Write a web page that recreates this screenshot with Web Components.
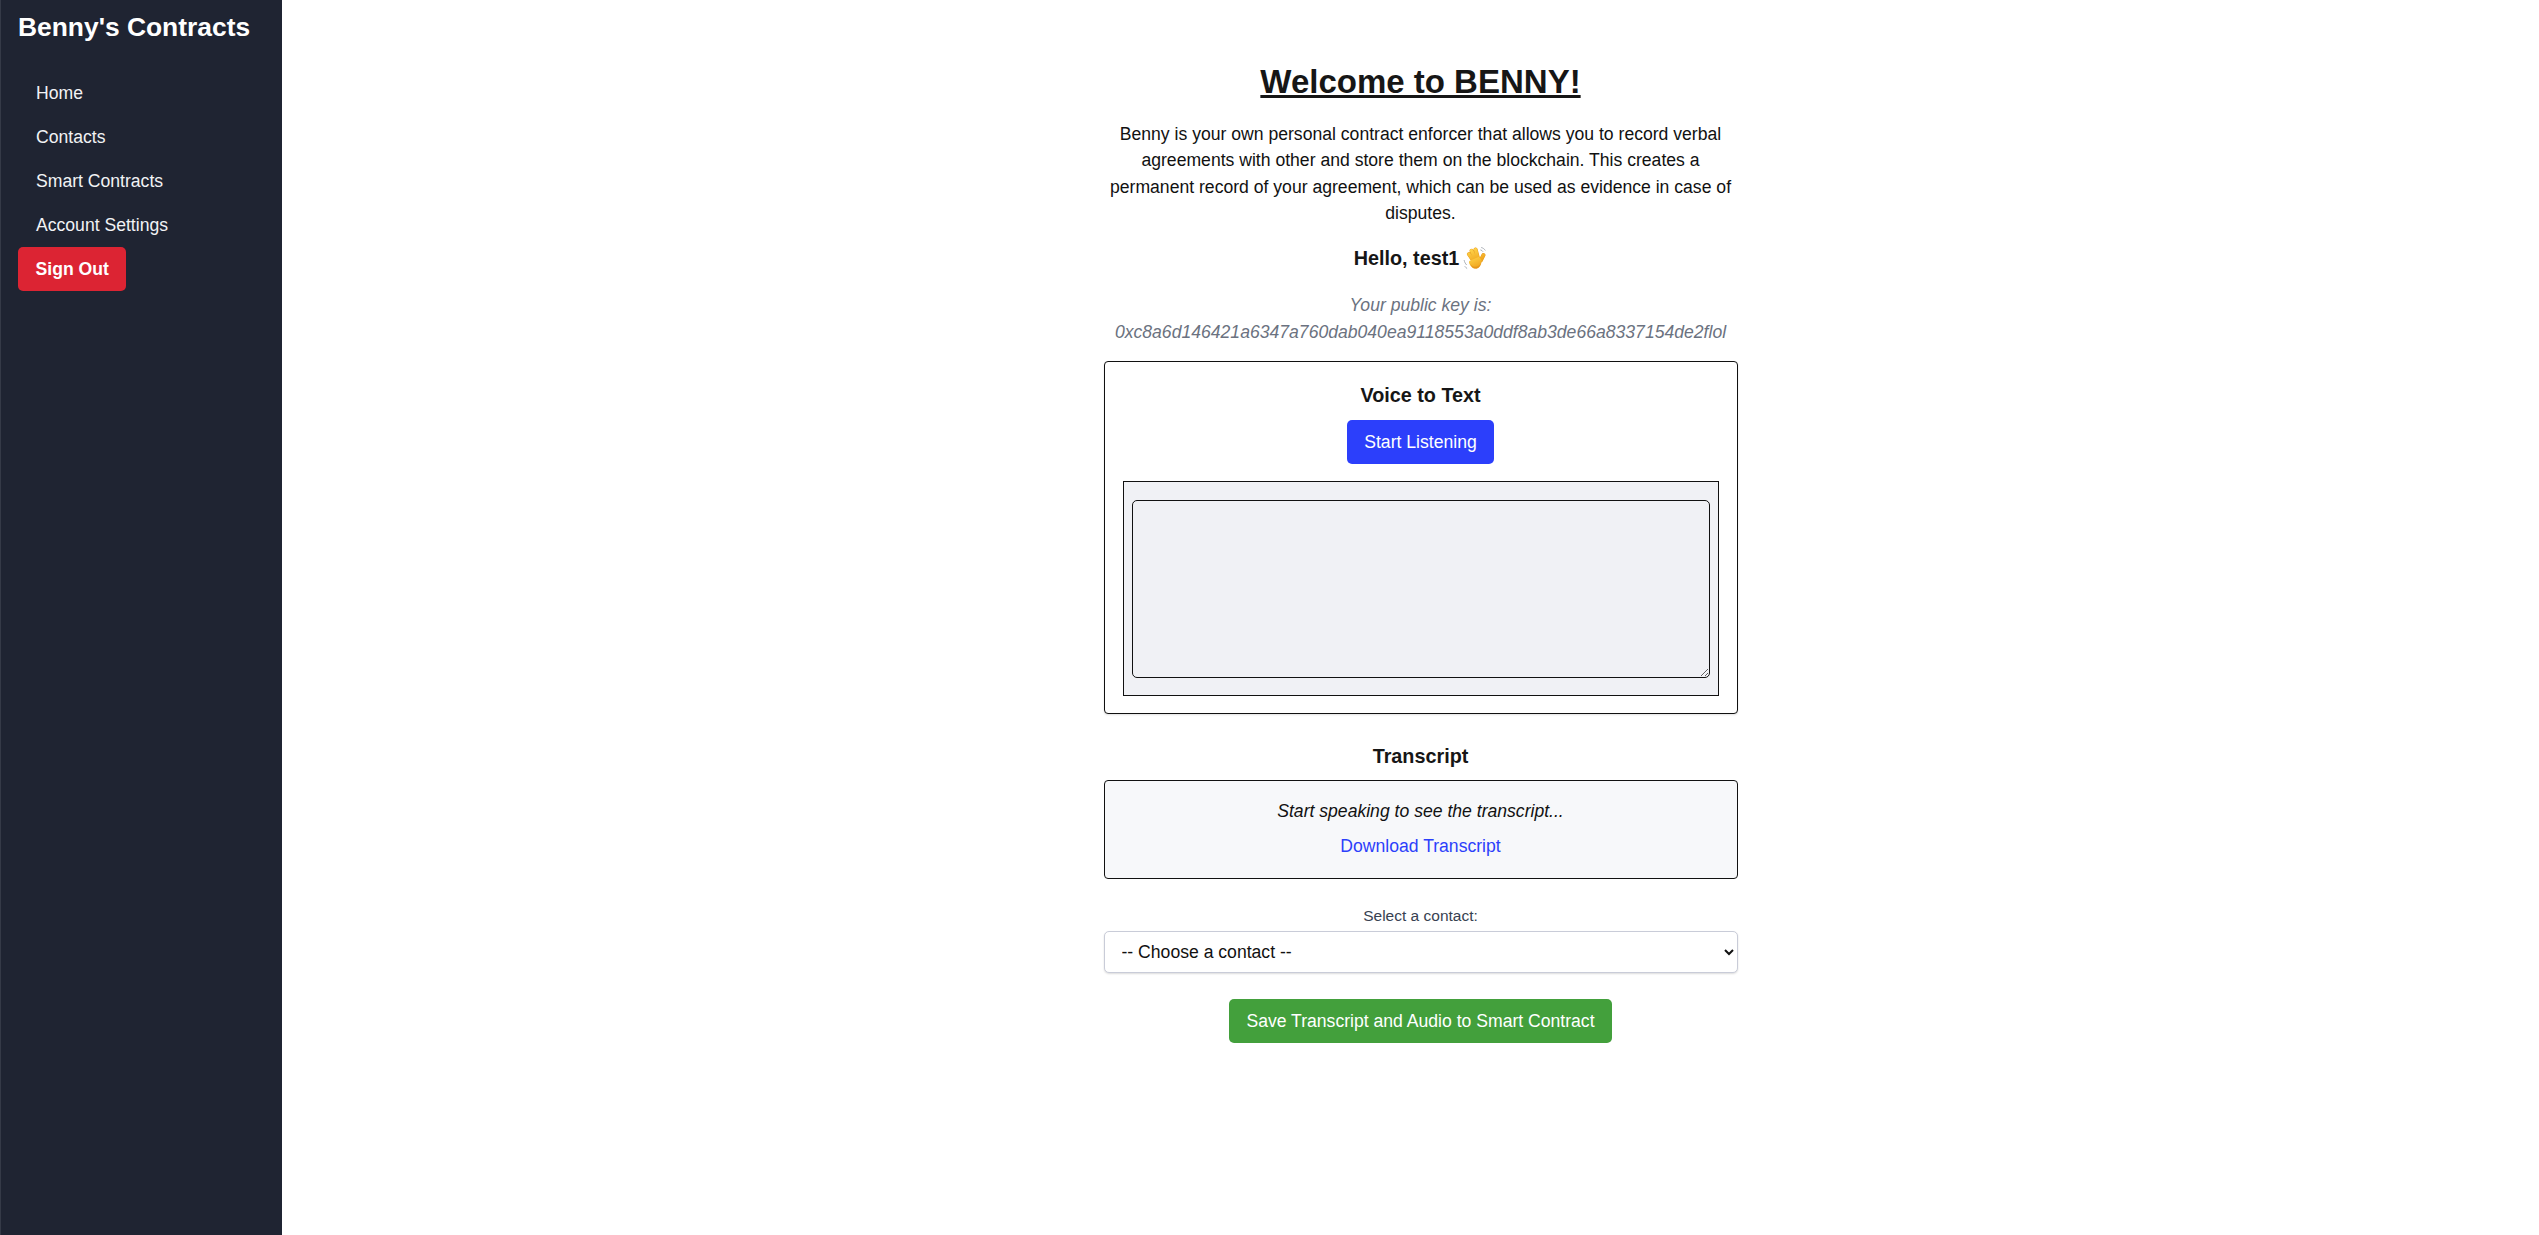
<!DOCTYPE html>
<html lang="en"><head><meta charset="utf-8"><title>Benny's Contracts</title>
<style>
html,body{margin:0;padding:0;height:100%;background:#fff}
body{font-family:"Liberation Sans",Arial,sans-serif;font-size:17.6px;line-height:26.4px;color:#000}
benny-app{height:1235px}
</style></head><body>
<benny-app>
  <benny-sidebar slot="side" title-text="Benny's Contracts">
    <benny-nav-link>Home</benny-nav-link>
    <benny-nav-link>Contacts</benny-nav-link>
    <benny-nav-link>Smart Contracts</benny-nav-link>
    <benny-nav-link>Account Settings</benny-nav-link>
    <benny-button kind="danger" strong>Sign Out</benny-button>
  </benny-sidebar>
  <benny-home></benny-home>
</benny-app>
<script>
function def(name, html, setup){
  customElements.define(name, class extends HTMLElement{
    constructor(){super();const r=this.attachShadow({mode:"open"});r.innerHTML=html;}
    connectedCallback(){ if(setup) setup(this); }
  });
}
def("benny-app",`<style>:host{display:flex;align-items:stretch;width:100%;box-sizing:border-box}
main{flex:1;display:flex;justify-content:center;padding-left:20px;min-width:0}</style>
<slot name="side"></slot><main><slot></slot></main>`);
def("benny-sidebar",`<style>:host{display:flex;flex-direction:column;align-items:flex-start;box-sizing:border-box;width:282px;flex:none;background:#1f2432;border-left:1px solid #353a47;padding:0 17px;color:#fff}
h2{margin:0;font-size:26.4px;line-height:54px;font-weight:700;white-space:nowrap;color:#fff}
nav{display:flex;flex-direction:column;align-items:flex-start;margin-top:17px;align-self:stretch}</style>
<h2></h2><nav><slot></slot></nav>`,el=>{el.shadowRoot.querySelector("h2").textContent=el.getAttribute("title-text")});
def("benny-nav-link",`<style>:host{display:block;height:44px;line-height:44px;padding:0 18px;font-size:17.6px;color:#f2f3f5;white-space:nowrap}</style><slot></slot>`);
def("benny-button",`<style>:host{display:inline-flex;align-items:center;justify-content:center;box-sizing:border-box;height:44px;padding:0 17.6px;border-radius:5px;font-size:17.6px;color:#fff;white-space:nowrap}
:host([kind=danger]){background:#dc2433;font-weight:700}
:host([kind=primary]){background:#2c3ffb}
:host([kind=success]){background:#43a03c}</style><slot></slot>`);
def("benny-card",`<style>:host{display:block;box-sizing:border-box;width:634px;border:1px solid #111;border-radius:4px;background:#fff;box-shadow:0 1px 2px rgba(0,0,0,.12);text-align:center}
:host([tone=soft]){background:#f7f8fa;box-shadow:none}</style><slot></slot>`);
def("benny-home",`<style>
:host{display:flex;flex-direction:column;align-items:center;width:634px;text-align:center;color:#111}
h1{margin:60px 0 0;font-size:33px;line-height:44px;font-weight:700;text-decoration:underline;color:#161616}
.intro{margin:17px 0 0;font-size:17.6px;line-height:26.4px;color:#111;width:634px}
.hello{margin:18px 0 0;font-size:19.8px;line-height:26px;font-weight:700;color:#161616;display:flex;align-items:center;gap:4px}
.hello svg{width:24px;height:24px;flex:none}
.key{margin:21.6px 0 0;font-style:italic;color:#6b7280;font-size:17.6px;line-height:26.4px}
.voice{margin-top:16px;height:353px;padding:20px 18px 0}
h3{margin:0;font-size:19.8px;line-height:26px;font-weight:700;color:#161616}
.voice benny-button{margin-top:12px}
.well{box-sizing:border-box;margin-top:17px;height:215px;border:1px solid #111;background:#f0f1f5;padding:18px 8px 0;width:596px}
textarea{display:block;box-sizing:border-box;width:578px;height:178px;margin:0;border:1px solid #111;border-radius:5px;background:#f0f1f5;padding:8px;font:16px "Liberation Sans",sans-serif;resize:vertical;outline:none}
.tr-title{margin-top:29px}
.tr{margin-top:11px;height:99px;padding:17px 10px 0}
.tr p{margin:0;font-style:italic;color:#111;font-size:17.6px;line-height:26.4px}
.tr a{display:block;margin-top:9px;color:#2c3ffb;text-decoration:none;line-height:26.4px}
label{display:block;margin-top:25px;font-size:15.5px;line-height:24px;color:#374151}
select{display:block;box-sizing:border-box;width:634px;height:42px;margin-top:3px;padding:0 13px;border:1px solid #c9ccd8;border-radius:5px;background:#fff;font:17.6px "Liberation Sans",sans-serif;color:#111;box-shadow:0 1px 2px rgba(0,0,0,.14);outline:none}
.save{margin-top:26px}
</style>
<h1>Welcome to BENNY!</h1>
<p class="intro">Benny is your own personal contract enforcer that allows you to record verbal agreements with other and store them on the blockchain. This creates a permanent record of your agreement, which can be used as evidence in case of disputes.</p>
<div class="hello"><span>Hello, test1</span><svg viewBox="0 0 24 24" role="img" aria-label="waving hand"><defs><linearGradient id="h" x1="0" y1="0" x2=".5" y2="1"><stop offset="0" stop-color="#ffd54a"/><stop offset="1" stop-color="#f0a61f"/></linearGradient></defs><g fill="none" stroke="#a9aeb5" stroke-width="1" stroke-linecap="round"><path d="M1.2 14.5c.4 1.7 1.1 3 2.2 4.2M2 20.6c.5.7 1.1 1.2 1.8 1.7M18.6 1.6c1.4.4 2.6 1.2 3.5 2.5M17.8 4c.8.2 1.5.7 2 1.4"/></g><g fill="none" stroke="#e59a22" stroke-width="4.1" stroke-linecap="round"><path d="M6 8.2 11 15.5M8.6 4.8l4.6 9.6M12.6 3.6l2.9 10.8M20.4 9.2l-2.6 5.2"/></g><g fill="none" stroke="url(#h)" stroke-width="3.3" stroke-linecap="round"><path d="M6 8.2 11 15.5M8.6 4.8l4.6 9.6M12.6 3.6l2.9 10.8M20.4 9.2l-2.6 5.2"/></g><path d="M8 14.2 16 10.8 18.6 14.2C18.4 18.6 16.4 22.6 12.6 22.6 9.4 22.6 7.6 20 6.3 17.4 5.6 15.8 5.9 14.6 8 14.2Z" fill="url(#h)"/><path d="M7.2 18.2C8.6 20.8 10.4 22.6 12.6 22.6 15.6 22.6 17.6 20 18.3 16.8 16.8 19.6 14.8 20.8 12.6 20.8 10.6 20.8 8.8 19.8 7.2 18.2Z" fill="#e5951d"/></svg></div>
<div class="key">Your public key is:<br>0xc8a6d146421a6347a760dab040ea9118553a0ddf8ab3de66a8337154de2flol</div>
<benny-card class="voice">
  <h3>Voice to Text</h3>
  <benny-button kind="primary">Start Listening</benny-button>
  <div class="well"><textarea aria-label="Voice transcript"></textarea></div>
</benny-card>
<h3 class="tr-title">Transcript</h3>
<benny-card class="tr" tone="soft">
  <p>Start speaking to see the transcript...</p>
  <a href="#">Download Transcript</a>
</benny-card>
<label for="c">Select a contact:</label>
<select id="c"><option>-- Choose a contact --</option></select>
<benny-button class="save" kind="success">Save Transcript and Audio to Smart Contract</benny-button>`);
</script>
</body></html>
